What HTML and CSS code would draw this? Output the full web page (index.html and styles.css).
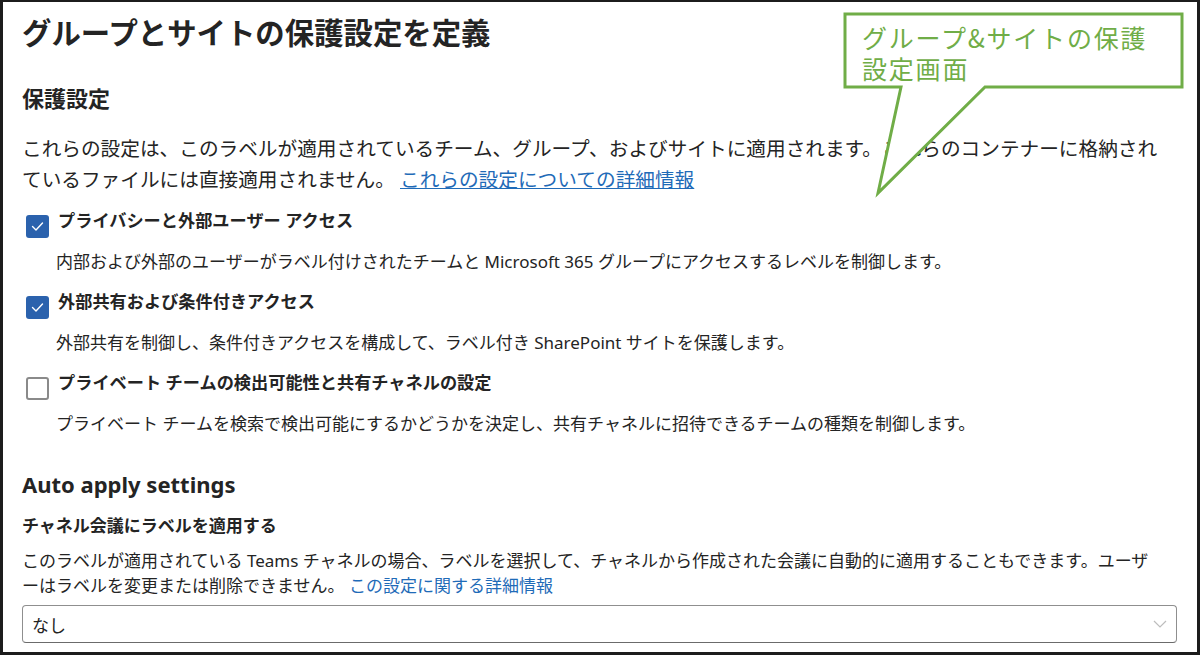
FILE: index.html
```html
<!DOCTYPE html>
<html lang="ja">
<head>
    <meta charset="UTF-8">
    <meta name="viewport" content="width=device-width, initial-scale=1.0">
    <title>グループとサイトの保護設定を定義</title>
    <link rel="stylesheet" href="styles.css">
</head>
<body>

<div class="frame">
    <h1 class="title">グループとサイトの保護設定を定義</h1>

    <h2 class="section">保護設定</h2>
    <p class="intro">これらの設定は、このラベルが適用されているチーム、グループ、およびサイトに適用されます。これらのコンテナーに格納され<br>ているファイルには直接適用されません。 <a class="link" href="#">これらの設定についての詳細情報</a></p>

    <div class="options">
        <div class="option">
            <div class="option-head">
                <span class="check checked">
                    <svg viewBox="0 0 23 23" width="23" height="23"><polyline points="6.5,11.5 10,15 16.5,8" fill="none" stroke="#fff" stroke-width="1.4" stroke-linecap="round" stroke-linejoin="round"/></svg>
                </span>
                <span class="option-label">プライバシーと外部ユーザー アクセス</span>
            </div>
            <p class="option-desc">内部および外部のユーザーがラベル付けされたチームと Microsoft 365 グループにアクセスするレベルを制御します。</p>
        </div>
        <div class="option">
            <div class="option-head">
                <span class="check checked">
                    <svg viewBox="0 0 23 23" width="23" height="23"><polyline points="6.5,11.5 10,15 16.5,8" fill="none" stroke="#fff" stroke-width="1.4" stroke-linecap="round" stroke-linejoin="round"/></svg>
                </span>
                <span class="option-label">外部共有および条件付きアクセス</span>
            </div>
            <p class="option-desc">外部共有を制御し、条件付きアクセスを構成して、ラベル付き SharePoint サイトを保護します。</p>
        </div>
        <div class="option">
            <div class="option-head">
                <span class="check"></span>
                <span class="option-label">プライベート チームの検出可能性と共有チャネルの設定</span>
            </div>
            <p class="option-desc">プライベート チームを検索で検出可能にするかどうかを決定し、共有チャネルに招待できるチームの種類を制御します。</p>
        </div>
    </div>

    <h2 class="section auto">Auto apply settings</h2>
    <h3 class="field-label">チャネル会議にラベルを適用する</h3>
    <p class="field-desc">このラベルが適用されている Teams チャネルの場合、ラベルを選択して、チャネルから作成された会議に自動的に適用することもできます。ユーザ<br>ーはラベルを変更または削除できません。 <a class="plain-link" href="#">この設定に関する詳細情報</a></p>

    <div class="dropdown">
        <span>なし</span>
        <svg viewBox="0 0 14 8" width="14" height="8"><polyline points="1,1 7,7 13,1" fill="none" stroke="#bdbdbd" stroke-width="1.2"/></svg>
    </div>

    <!-- annotation balloon -->
    <div class="callout">
        <svg class="callout-shape" viewBox="0 0 350 190" width="350" height="190">
            <path d="M5,4 H342 V77 H145 L38,183 L61,77 H5 Z" fill="#fff" stroke="#70ad47" stroke-width="3" stroke-linejoin="miter"/>
        </svg>
        <div class="callout-text">グループ&amp;サイトの保護<br>設定画面</div>
    </div>
</div>

</body>
</html>
```

FILE: styles.css
```css
body {
    margin: 0;
    font-family: "Noto Sans", "Noto Sans CJK JP", sans-serif;
    color: #242424;
    background: #fff;
}
.frame {
    position: relative;
    width: 1200px;
    height: 655px;
    box-sizing: border-box;
    border: 3px solid #1c1c1c;
    border-top-width: 2px;
    padding: 13px 20px 0 19px;
    overflow: hidden;
}
.title {
    width: fit-content;
    margin: 0;
    font-size: 29.4px;
    line-height: 36px;
    font-weight: 700;
}
.section {
    margin: 32px 0 0;
    font-size: 22px;
    line-height: 30px;
    font-weight: 700;
}
.intro {
    margin: 19.5px 0 0;
    font-size: 19.67px;
    line-height: 31px;
    white-space: nowrap;
}
.link {
    color: #1f6bb8;
    text-decoration: underline;
}
.options {
    display: flex;
    flex-direction: column;
    gap: 16.5px;
    margin-top: 14.5px;
}
.option-head {
    display: flex;
    align-items: flex-start;
}
.check {
    box-sizing: border-box;
    width: 23px;
    height: 23px;
    margin: 6px 9px 0 4px;
    border: 2px solid #8a8a8a;
    border-radius: 3px;
    background: #fff;
    flex-shrink: 0;
}
.check.checked {
    border: none;
    background: #2b62ad;
}
.check svg {
    display: block;
}
.option-label {
    font-size: 17.2px;
    line-height: 24px;
    font-weight: 700;
}
.option-desc {
    margin: 11.5px 0 0 34px;
    font-size: 17px;
    line-height: 24px;
}
.section.auto {
    margin-top: 33.5px;
}
.field-label {
    margin: 15px 0 0;
    font-size: 17px;
    line-height: 24px;
    font-weight: 700;
}
.field-desc {
    margin: 9.5px 0 0;
    font-size: 17px;
    line-height: 25px;
    white-space: nowrap;
}
.plain-link {
    color: #1f6bb8;
    text-decoration: none;
}
.dropdown {
    display: flex;
    align-items: center;
    justify-content: space-between;
    box-sizing: border-box;
    height: 38px;
    margin-top: 7.5px;
    padding: 0 9px 0 9px;
    border: 1px solid #8f8f8f;
    border-bottom-color: #6b6b6b;
    border-radius: 4px;
    font-size: 17px;
}
.dropdown svg {
    display: block;
}
.callout {
    position: absolute;
    left: 837px;
    top: 8px;
    width: 350px;
    height: 190px;
}
.callout-shape {
    display: block;
}
.callout-text {
    position: absolute;
    left: 22px;
    top: 11.5px;
    font-family: "Noto Sans CJK JP", sans-serif;
    font-size: 25px;
    line-height: 31px;
    letter-spacing: 1.8px;
    color: #70ad47;
}
```
